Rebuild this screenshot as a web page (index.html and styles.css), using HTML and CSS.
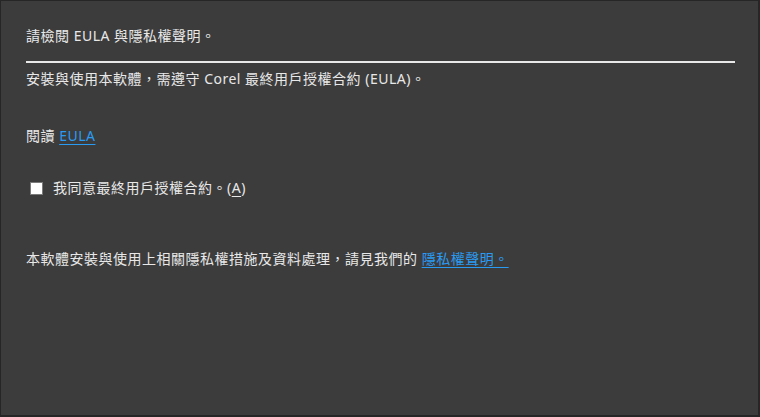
FILE: index.html
```html
<!DOCTYPE html>
<html lang="zh-Hant">
<head>
<meta charset="utf-8">
<link rel="stylesheet" href="styles.css">
</head>
<body>
<div class="window">
  <div class="title">請檢閱 EULA 與隱私權聲明。</div>
  <div class="rule"></div>
  <div class="text intro">安裝與使用本軟體，需遵守 Corel 最終用戶授權合約 (EULA)。</div>
  <div class="text read">閱讀 <a class="link" href="#">EULA</a></div>
  <label class="agree">
    <span class="box"></span>
    <span class="text">我同意最終用戶授權合約。(<span class="key">A</span>)</span>
  </label>
  <div class="text privacy">本軟體安裝與使用上相關隱私權措施及資料處理，請見我們的 <a class="link" href="#">隱私權聲明。</a></div>
</div>
</body>
</html>
```

FILE: styles.css
```css
html, body {
  margin: 0;
  padding: 0;
  background: #3c3c3c;
}
.window {
  box-sizing: border-box;
  width: 760px;
  height: 417px;
  background: #3c3c3c;
  border-top: 1px solid #262626;
  border-left: 1px solid #262626;
  border-right: 2px solid #262626;
  border-bottom: 2px solid #262626;
  padding: 25px 23px 0 25px;
  color: #e8e8e8;
  font-family: "Noto Sans", "Noto Sans CJK TC", sans-serif;
  font-size: 14px;
  letter-spacing: 0.5px;
}
.title, .text {
  line-height: 20px;
  white-space: nowrap;
}
.rule {
  height: 2px;
  background: #e8e8e8;
  margin-top: 15px;
}
.intro {
  margin-top: 6px;
}
.read {
  margin-top: 37px;
}
.link {
  color: #2a9bf3;
  text-decoration: underline;
  text-underline-offset: 3px;
}
.agree {
  display: flex;
  align-items: center;
  gap: 10px;
  margin-top: 32px;
  padding-left: 4px;
}
.box {
  box-sizing: border-box;
  width: 13px;
  height: 13px;
  background: #ffffff;
  border: 1px solid #7a7a7a;
}
.key {
  text-decoration: underline;
  text-underline-offset: 3px;
}
.privacy {
  margin-top: 51px;
}
```
